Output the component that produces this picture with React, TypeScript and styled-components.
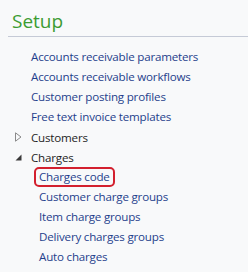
import React, { FC } from "react";
import styled, { createGlobalStyle } from "styled-components";

const GlobalStyle = createGlobalStyle`
  html, body {
    margin: 0;
    padding: 0;
    background: #f8f9fa;
  }
  body {
    font-family: "Open Sans", "Noto Sans", sans-serif;
  }
`;

const Pane = styled.div`
  width: 248px;
  height: 272px;
  overflow: hidden;
  background: #f8f9fa;
`;

const Title = styled.h1`
  margin: 0 0 0 8px;
  padding: 9px 0 3px 4px;
  font-size: 19px;
  font-weight: 400;
  line-height: 24px;
  color: #3c9c32;
  border-bottom: 1px solid #c5cad6;
`;

const Tree = styled.ul`
  list-style: none;
  margin: 0;
  padding: 10px 0 0 0;
`;

const Row = styled.li<{ $level: number }>`
  display: flex;
  align-items: center;
  height: 20px;
  padding-left: ${(p) => (p.$level === 0 ? 11 : 34)}px;
  font-size: 11.6px;
  letter-spacing: -0.2px;
`;

const Toggle = styled.span`
  width: 15px;
  height: 20px;
  display: flex;
  align-items: center;
  justify-content: center;
`;

const Link = styled.span<{ $marked?: boolean }>`
  color: #1f3f8c;
  padding: 0 3px;
  line-height: 16px;
  border: 2px solid ${(p) => (p.$marked ? "#d3202e" : "transparent")};
  border-radius: 5px;
`;

const Node = styled.span`
  color: #1e1e1e;
  padding: 0 5px;
`;

const Collapsed = () => (
  <svg width="7" height="10" viewBox="0 0 7 10">
    <path d="M0.5 0.8 L6 5 L0.5 9.2 Z" fill="none" stroke="#8a8a8a" strokeWidth="1" />
  </svg>
);

const Expanded = () => (
  <svg width="7" height="7" viewBox="0 0 7 7">
    <path d="M6.5 0.5 L6.5 6.5 L0.5 6.5 Z" fill="#3a3a3a" />
  </svg>
);

const links = [
  "Accounts receivable parameters",
  "Accounts receivable workflows",
  "Customer posting profiles",
  "Free text invoice templates",
];

const charges = [
  "Customer charge groups",
  "Item charge groups",
  "Delivery charges groups",
  "Auto charges",
];

const App: FC = () => {
  return (
    <Pane>
      <GlobalStyle />
      <Title>Setup</Title>
      <Tree>
        {links.map((l) => (
          <Row $level={0} key={l}>
            <Toggle />
            <Link>{l}</Link>
          </Row>
        ))}
        <Row $level={0}>
          <Toggle>
            <Collapsed />
          </Toggle>
          <Node>Customers</Node>
        </Row>
        <Row $level={0}>
          <Toggle>
            <Expanded />
          </Toggle>
          <Node>Charges</Node>
        </Row>
        <Row $level={1}>
          <Link $marked>Charges code</Link>
        </Row>
        {charges.map((l) => (
          <Row $level={1} key={l}>
            <Link>{l}</Link>
          </Row>
        ))}
      </Tree>
    </Pane>
  );
};

export default App;
